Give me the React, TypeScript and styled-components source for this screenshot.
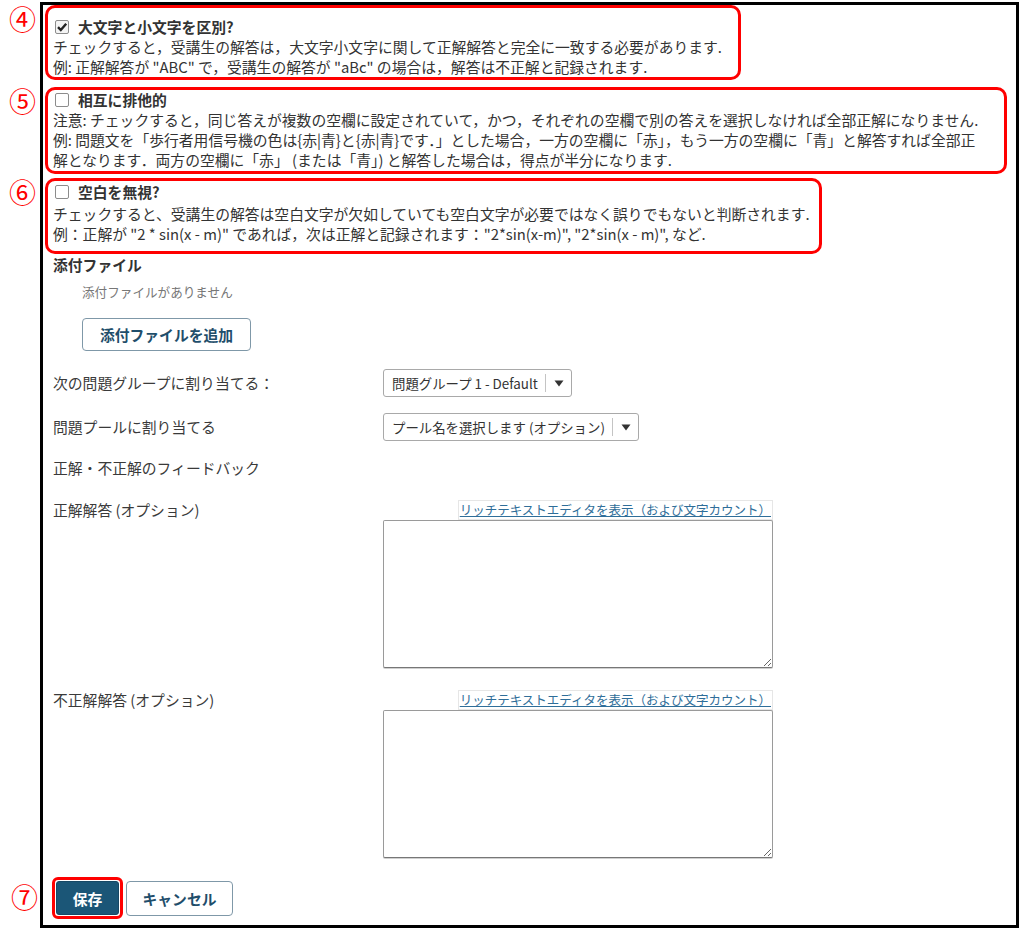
import styled, { createGlobalStyle } from 'styled-components';

const GlobalStyle = createGlobalStyle`
  html, body {
    margin: 0;
    padding: 0;
    background: #fff;
  }
  body {
    font-family: 'Noto Sans CJK JP', sans-serif;
    font-size: 14.8px;
    color: #333;
  }
`;

const Page = styled.div`
  padding: 2px 0 0 40px;
`;

const Frame = styled.div`
  box-sizing: border-box;
  width: 979px;
  border: 3px solid #000;
  padding: 0 0 6px 2px;
  display: flex;
  flex-direction: column;
`;

// red annotation box
const Highlight = styled.div<{ $width?: number; $pad: string; $mt: number; $radius?: number }>`
  position: relative;
  box-sizing: border-box;
  width: ${(p) => (p.$width ? `${p.$width}px` : 'auto')};
  margin-top: ${(p) => p.$mt}px;
  padding: ${(p) => p.$pad};
  border: 3px solid #f00;
  border-radius: ${(p) => p.$radius ?? 10}px;
`;

const Marker = styled.span<{ $top: number; $left: number }>`
  position: absolute;
  top: ${(p) => p.$top}px;
  left: ${(p) => p.$left}px;
  font-family: 'Noto Sans CJK JP', serif;
  font-size: 27px;
  line-height: 28px;
  color: #f00;
`;

const OptionTitle = styled.div`
  display: flex;
  align-items: center;
  gap: 9px;
  padding-left: 2px;
  font-weight: 700;
  line-height: 20px;
`;

const OptionText = styled.div<{ $mt: number }>`
  margin-top: ${(p) => p.$mt}px;
  line-height: 20px;
  white-space: nowrap;
`;

const CheckBox = styled.span<{ $checked?: boolean }>`
  box-sizing: border-box;
  width: 14px;
  height: 14px;
  border: 1px solid #8c8c8c;
  border-radius: 2px;
  background: ${(p) => (p.$checked ? '#f4f4f4' : '#fff')};
  display: inline-flex;
  align-items: center;
  justify-content: center;
`;

const Plain = styled.div<{ $mt: number; $indent?: number }>`
  margin-top: ${(p) => p.$mt}px;
  padding-left: ${(p) => 8 + (p.$indent ?? 0)}px;
`;

const SectionTitle = styled.div`
  font-weight: 700;
  line-height: 20px;
`;

const Muted = styled.div`
  font-size: 12.6px;
  line-height: 20px;
  color: #777;
`;

const Heading = styled.div`
  line-height: 20px;
  color: #3a3a3a;
`;

const SecondaryButton = styled.button<{ $w: number; $h: number }>`
  box-sizing: border-box;
  width: ${(p) => p.$w}px;
  height: ${(p) => p.$h}px;
  padding: 0;
  background: #fff;
  border: 1px solid #7f98a8;
  border-radius: 4px;
  font-family: inherit;
  font-size: 14.8px;
  font-weight: 700;
  color: #1f4e6b;
`;

const PrimaryButton = styled.button`
  box-sizing: border-box;
  width: 63px;
  height: 34px;
  padding: 0;
  background: #1b5677;
  border: 1px solid #164865;
  border-radius: 3px;
  font-family: inherit;
  font-size: 14.8px;
  font-weight: 700;
  color: #fff;
`;

const FieldRow = styled.div<{ $mt: number; $align?: string }>`
  margin-top: ${(p) => p.$mt}px;
  padding-left: 8px;
  display: grid;
  grid-template-columns: 330px 390px;
  align-items: ${(p) => p.$align ?? 'center'};
`;

const FieldLabel = styled.div`
  line-height: 20px;
  color: #3a3a3a;
`;

const Select = styled.div`
  box-sizing: border-box;
  justify-self: start;
  height: 28px;
  display: inline-flex;
  align-items: center;
  padding: 0 7px 0 8px;
  border: 1px solid #a9a9a9;
  border-radius: 3px;
  font-size: 13.4px;
  color: #333;
`;

const SelectDivider = styled.span`
  width: 1px;
  height: 18px;
  background: #c4c4c4;
  margin: 0 8px 0 7px;
`;

const EditorColumn = styled.div`
  display: flex;
  flex-direction: column;
  align-items: flex-end;
`;

const EditorLink = styled.a`
  box-sizing: border-box;
  height: 20px;
  line-height: 18px;
  padding: 0 1px;
  border: 1px solid #e6e6e6;
  font-size: 12.5px;
  color: #2f6e99;
  text-decoration: underline;
`;

const TextArea = styled.textarea`
  box-sizing: border-box;
  width: 390px;
  height: 148px;
  margin: 0;
  border: 1px solid #9a9a9a;
  border-bottom-color: #777;
  border-radius: 2px;
  box-shadow: 0 1px 0 #d0d0d0;
  font-family: inherit;
`;

const ButtonRow = styled.div`
  margin-top: 19px;
  padding-left: 7px;
  display: flex;
  align-items: center;
  gap: 3px;
`;

const Check = () => (
  <svg width="12" height="12" viewBox="0 0 12 12">
    <path d="M2 6.2 L4.8 9 L10.2 2.8" fill="none" stroke="#222" strokeWidth="2.4" />
  </svg>
);

const Arrow = () => (
  <svg width="10" height="7" viewBox="0 0 10 7">
    <path d="M0.5 0.5 H9.5 L5 6.5 Z" fill="#333" />
  </svg>
);

type OptionProps = {
  marker: string;
  title: string;
  checked?: boolean;
  width: number;
  pad: string;
  mt: number;
  textMt?: number;
  children: React.ReactNode;
};

const Option = ({ marker, title, checked, width, pad, mt, textMt = 0, children }: OptionProps) => (
  <Highlight $width={width} $pad={pad} $mt={mt}>
    <Marker $top={-3} $left={-39}>{marker}</Marker>
    <OptionTitle>
      <CheckBox $checked={checked}>{checked && <Check />}</CheckBox>
      {title}
    </OptionTitle>
    <OptionText $mt={textMt}>{children}</OptionText>
  </Highlight>
);

const EditorField = ({ label, mt }: { label: string; mt: number }) => (
  <FieldRow $mt={mt} $align="start">
    <FieldLabel>{label}</FieldLabel>
    <EditorColumn>
      <EditorLink href="#">リッチテキストエディタを表示（および文字カウント）</EditorLink>
      <TextArea />
    </EditorColumn>
  </FieldRow>
);

export default function App() {
  return (
    <Page>
      <GlobalStyle />
      <Frame>
        <Option marker="④" title="大文字と小文字を区別?" checked width={696} pad="9px 0 0 5px" mt={0}>
          チェックすると，受講生の解答は，大文字小文字に関して正解解答と完全に一致する必要があります.
          <br />
          例: 正解解答が "ABC" で，受講生の解答が "aBc" の場合は，解答は不正解と記録されます.
        </Option>

        <Option marker="⑤" title="相互に排他的" width={962} pad="0 0 1px 5px" mt={7}>
          注意: チェックすると，同じ答えが複数の空欄に設定されていて，かつ，それぞれの空欄で別の答えを選択しなければ全部正解になりません.
          <br />
          例: 問題文を「歩行者用信号機の色は{'{'}赤|青{'}'}と{'{'}赤|青{'}'}です．」とした場合，一方の空欄に「赤」，もう一方の空欄に「青」と解答すれば全部正
          <br />
          解となります．両方の空欄に「赤」 (または「青」) と解答した場合は，得点が半分になります.
        </Option>

        <Option marker="⑥" title="空白を無視?" width={777} pad="1px 0 7px 5px" mt={4} textMt={2}>
          チェックすると、受講生の解答は空白文字が欠如していても空白文字が必要ではなく誤りでもないと判断されます.
          <br />
          例：正解が "2 * sin(x - m)" であれば，次は正解と記録されます："2*sin(x-m)", "2*sin(x - m)", など.
        </Option>

        <Plain $mt={1}>
          <SectionTitle>添付ファイル</SectionTitle>
        </Plain>
        <Plain $mt={7} $indent={29}>
          <Muted>添付ファイルがありません</Muted>
        </Plain>
        <Plain $mt={16} $indent={29}>
          <SecondaryButton $w={169} $h={33}>添付ファイルを追加</SecondaryButton>
        </Plain>

        <FieldRow $mt={18}>
          <FieldLabel>次の問題グループに割り当てる：</FieldLabel>
          <Select>
            問題グループ 1 - Default
            <SelectDivider />
            <Arrow />
          </Select>
        </FieldRow>

        <FieldRow $mt={16}>
          <FieldLabel>問題プールに割り当てる</FieldLabel>
          <Select>
            プール名を選択します (オプション)
            <SelectDivider />
            <Arrow />
          </Select>
        </FieldRow>

        <Plain $mt={17}>
          <Heading>正解・不正解のフィードバック</Heading>
        </Plain>

        <EditorField label="正解解答 (オプション)" mt={22} />
        <EditorField label="不正解解答 (オプション)" mt={22} />

        <ButtonRow>
          <Highlight $pad="1px" $mt={0} $radius={6}>
            <Marker $top={3} $left={-44}>⑦</Marker>
            <PrimaryButton>保存</PrimaryButton>
          </Highlight>
          <SecondaryButton $w={107} $h={35}>キャンセル</SecondaryButton>
        </ButtonRow>
      </Frame>
    </Page>
  );
}
